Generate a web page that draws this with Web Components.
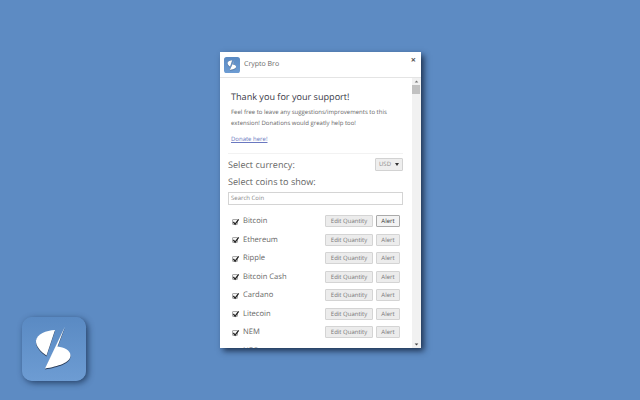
<!DOCTYPE html>
<html><head><meta charset="utf-8">
<style>
html,body{margin:0;height:100%}
body{width:640px;height:400px;background:#5d8bc3;font-family:"Open Sans",sans-serif;overflow:hidden;text-rendering:geometricPrecision}
</style></head><body>
<app-stage></app-stage>
<script>
const LOGO=`<g style="filter:drop-shadow(.6px 1px .7px rgba(20,30,50,.75))"><path d="M33 13C24 13.5 15 17 14 23.5C13.5 29 19 35 24.5 38.5Z" fill="#fff"/><path d="M43 9.5L35.5 29.5C42 30.5 48.5 33 48.5 38.5C48.5 45.5 36 49.5 23 51.5Z" fill="#fff"/></g>`;
function def(name,css,html){
  customElements.define(name,class extends HTMLElement{
    constructor(){super();const s=this.attachShadow({mode:"open"});s.innerHTML=`<style>${css}</style>${html}`;}
  });
}
def("app-logo",`:host{display:block;width:var(--s,64px);height:var(--s,64px);border-radius:calc(var(--s,64px)*.16);background:linear-gradient(#5a8ac3,#6d9cd3);box-shadow:var(--sh,2px 2px 6px rgba(15,35,65,.7))}
svg{display:block;width:100%;height:100%}
`,`<svg viewBox="0 0 64 64">${LOGO}</svg>`);
def("btn-x",`:host{display:block;box-sizing:border-box;height:12px;line-height:10px;border:1px solid #d4d4d4;border-radius:1px;background:#ececec;font-size:6px;color:#777;text-align:center}
:host([dark]){color:#333;border-color:#aaa;background:#f3f3f3}`,`<slot></slot>`);
customElements.define("coin-row",class extends HTMLElement{
  constructor(){super();const on=this.hasAttribute("on");const last=this.hasAttribute("last");const s=this.attachShadow({mode:"open"});s.innerHTML=`<style>:host{display:flex;align-items:center;height:18.5px;padding:0 12px;font-size:7.6px;color:#666}
i{box-sizing:border-box;width:6px;height:6px;margin:1px 5px 0 0;border:1px solid #aaa;border-radius:1px;background:#f4f4f4;position:relative;flex:none}
svg{position:absolute;left:-1px;top:-2px;width:8px;height:8px}
.n{flex:1}
.b{display:flex;gap:3px}
btn-x.e{width:48px}btn-x.a{width:24px}</style><i ${last?'style="visibility:hidden"':""}><svg viewBox="0 0 9 9"><path d="M1.5 4.5L3.5 7L7.5 1.5" fill="none" stroke="#222" stroke-width="1.4"/></svg></i><span class="n"><slot></slot></span>${last?"":`<span class="b"><btn-x class="e">Edit Quantity</btn-x><btn-x class="a" ${on?"dark":""}>Alert</btn-x></span>`}`;}
});
def("popup-head",`:host{display:flex;align-items:center;box-sizing:border-box;height:26px;border-bottom:1px solid #e4e4e4;padding-left:4px;font-size:7px;color:#666;position:relative;flex:none}
app-logo{--s:16px;--sh:none;margin-right:4px}
span.x{position:absolute;right:5px;top:3px;font-size:9px;font-weight:700;color:#555;line-height:9px}`,`<app-logo></app-logo><span>Crypto Bro</span><span class="x">×</span>`);
def("scroll-bar",`:host{display:flex;flex-direction:column;width:9px;background:#f1f1f1;flex:none}
.t{width:8px;height:9px;background:#c1c1c1}
.s{flex:1}
svg{display:block;width:9px;height:7px}`,`<svg viewBox="0 0 9 7"><path d="M2.7 4.5H6.3L4.5 2.5Z" fill="#777"/></svg><div class="t"></div><div class="s"></div><svg viewBox="0 0 9 7"><path d="M2.7 2.5H6.3L4.5 4.5Z" fill="#444"/></svg>`);
def("popup-win",`:host{display:flex;flex-direction:column;width:201px;height:296px;background:#fff;box-shadow:3px 3px 6px rgba(15,30,55,.8)}
.m{display:flex;flex:1;min-height:0}
.c{flex:1;min-width:0;overflow:hidden}
.intro{padding:12px 11px 0;height:63px;margin:0}
h1{font:400 9.1px/14px "Open Sans",sans-serif;color:#3a3a48;margin:0}
p{font-size:6px;line-height:10.5px;color:#666;margin:3px 0 7px}
a{font-size:6px;line-height:9px;color:#6a78c0;text-decoration:underline;display:block}
hr{border:0;height:1px;background:#f2f2f2;margin:0 9px 0 8px}
.l{display:flex;align-items:center;justify-content:space-between;padding:0 9px 0 8px;font-size:9.1px;color:#666;line-height:14px}
.u{box-sizing:border-box;width:28px;height:13px;border:1px solid #d2d2d2;border-radius:1px;background:#eee;font-size:6px;line-height:11px;color:#888;padding-left:3px;position:relative}
.u::after{content:"";position:absolute;right:3px;top:4px;border:2.5px solid transparent;border-top:3px solid #333;border-bottom:0}
.s{box-sizing:border-box;margin:2px 9px 7px 8px;height:13px;border:1px solid #d4d4d4;font-size:6px;line-height:11px;color:#888;padding-left:2px}
`,`<popup-head></popup-head><div class="m"><div class="c">
<div class="intro"><h1>Thank you for your support!</h1><p>Feel free to leave any suggestions/improvements to this extension! Donations would greatly help too!</p><a>Donate here!</a></div>
<hr>
<div class="l" style="margin-top:4px;height:13px"><span>Select currency:</span><span class="u">USD</span></div>
<div class="l" style="margin-top:2px;height:17px"><span>Select coins to show:</span></div>
<div class="s">Search Coin</div>
<coin-row on>Bitcoin</coin-row><coin-row>Ethereum</coin-row><coin-row>Ripple</coin-row><coin-row>Bitcoin Cash</coin-row><coin-row>Cardano</coin-row><coin-row>Litecoin</coin-row><coin-row>NEM</coin-row><coin-row last>NEO</coin-row>
</div><scroll-bar></scroll-bar></div>`);
def("app-stage",`:host{display:block;box-sizing:border-box;width:640px;height:400px;padding:52px 0 0 220px;position:relative}
app-logo{position:absolute;left:22px;top:317px}`,`<popup-win></popup-win><app-logo></app-logo>`);
</script>
</body></html>
